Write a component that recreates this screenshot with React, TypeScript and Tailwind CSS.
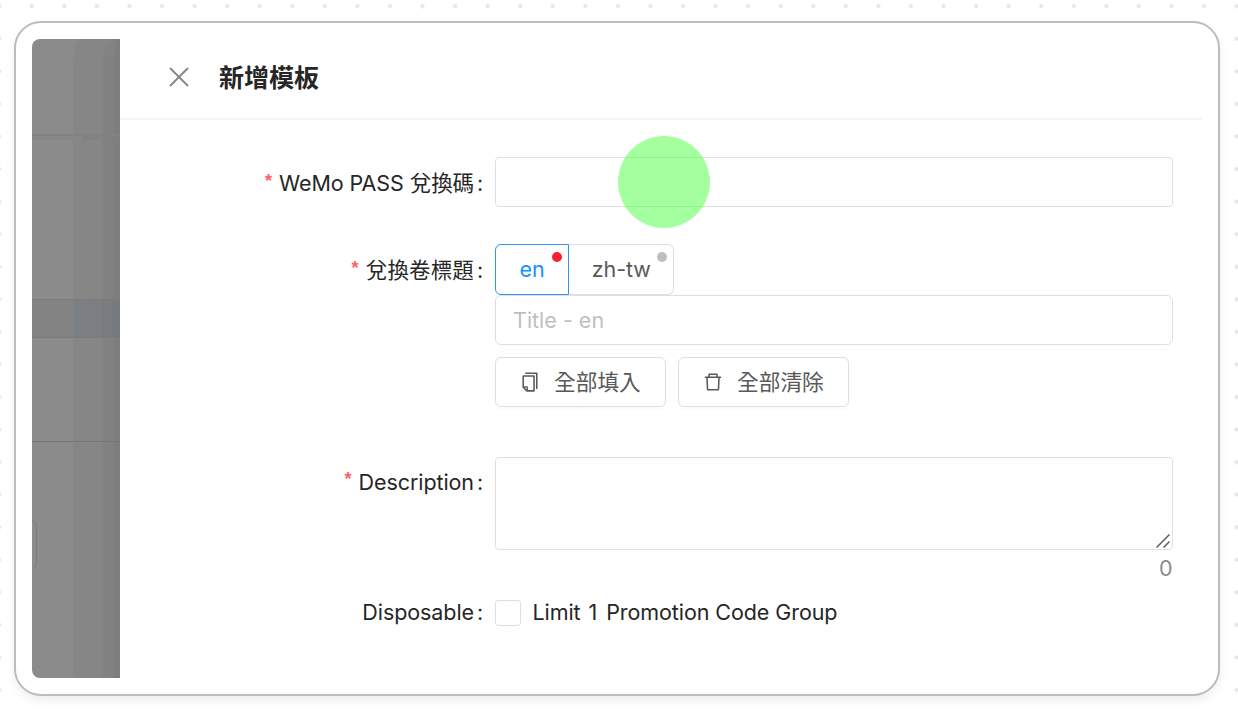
import type { ReactNode } from "react";

function Label({ text, required = false, className = "" }: { text: string; required?: boolean; className?: string }) {
  return (
    <div className={`flex w-[375.500px] shrink-0 items-center justify-end whitespace-nowrap pr-[11.500px] leading-8 tracking-[-0.08px] ${className}`}>
      {required && (
        <span className="mr-[7px] -mt-[5px] font-['Liberation_Sans','Noto_Sans',sans-serif] text-[18px] font-bold text-[#ff6163]">*</span>
      )}
      <span>{text}</span>
      <span className="ml-[3px] w-[6px] text-center">:</span>
    </div>
  );
}

function ActionButton({ icon, children }: { icon: ReactNode; children: ReactNode }) {
  return (
    <button className="flex h-[50px] w-[171px] items-center rounded-[6px] border-[1.5px] border-[#dedede] pl-[23px] text-[21.7px] text-[#595959] shadow-[0_3px_0_rgba(0,0,0,0.015)]">
      {icon}
      <span className="ml-[13.500px] whitespace-nowrap">{children}</span>
    </button>
  );
}

function CopyIcon() {
  return (
    <svg width="22" height="22" viewBox="0 0 1024 1024" fill="currentColor">
      <path d="M832 64H296c-4.400 0-8 3.600-8 8v56c0 4.400 3.600 8 8 8h496v688c0 4.400 3.600 8 8 8h56c4.400 0 8-3.600 8-8V96c0-17.700-14.300-32-32-32zM704 192H192c-17.700 0-32 14.300-32 32v530.700c0 8.500 3.400 16.600 9.400 22.600l173.300 173.300c2.200 2.200 4.700 4 7.400 5.500v1.900h4.200c3.500 1.300 7.200 2 11 2H704c17.700 0 32-14.300 32-32V224c0-17.700-14.300-32-32-32zM350 856.200L263.900 770H350v86.200zM664 888H414V746c0-22.100-17.900-40-40-40H232V264h432v624z" />
    </svg>
  );
}

function DeleteIcon() {
  return (
    <svg width="22" height="22" viewBox="0 0 1024 1024" fill="currentColor">
      <path d="M360 184h-8c4.400 0 8-3.600 8-8v8h304v-8c0 4.400 3.600 8 8 8h-8v72h72v-80c0-35.300-28.700-64-64-64H352c-35.300 0-64 28.700-64 64v80h72v-72zm504 72H160c-17.700 0-32 14.300-32 32v32c0 4.400 3.600 8 8 8h60.400l24.700 523c1.600 34.100 29.800 61 63.900 61h454c34.200 0 62.300-26.800 63.900-61l24.700-523H888c4.400 0 8-3.600 8-8v-32c0-17.700-14.300-32-32-32zM731.300 840H292.700l-24.200-512h487l-24.200 512z" />
    </svg>
  );
}

function Shade({ curved = false }: { curved?: boolean }) {
  return (
    <>
      <div className={`absolute inset-y-0 left-[41px] right-0 bg-[#868686] ${curved ? "rounded-tl-[7px_40px]" : ""}`} />
      <div className={`absolute inset-y-0 left-[70px] right-0 bg-[#828282] ${curved ? "rounded-tl-[10px_38px]" : ""}`} />
      <div className={`absolute inset-y-0 left-[81px] right-0 bg-[#7e7e7e] ${curved ? "rounded-tl-[9px_60px]" : ""}`} />
    </>
  );
}

function DimmedPage() {
  return (
    <div className="flex w-[87.500px] shrink-0 flex-col overflow-hidden rounded-l-[8px] bg-[#8b8b8b]">
      <div className="relative h-[95px] shrink-0">
        <Shade curved />
      </div>
      <div className="h-[2px] shrink-0 bg-[#828282]" />
      <div className="relative flex-1">
        <Shade />
        <div className="absolute inset-x-0 top-0 h-[4px] bg-[linear-gradient(90deg,#878787_0_50px,#828282_50px_80px,#7e7e7e_80px)]" />
        <div className="absolute inset-x-0 top-[163px] h-[39px] border-y border-[#7b7b7b] bg-[linear-gradient(90deg,#838383_0_41px,#7d8083_41px_50px,#7d7e83_50px_70px,#7b7c80_70px_80px,#76797d_80px)]" />
        <div className="absolute inset-x-0 top-[305px] h-px bg-[#777777]" />
        <div className="absolute -left-[10px] top-[384px] h-[49px] w-[15px] rounded-[6px] border-[1.5px] border-[#7d7d7d]" />
      </div>
    </div>
  );
}

export default function App() {
  return (
    <div className="relative h-[710px] w-[1238px] overflow-hidden bg-white pl-[14px] pt-[20.500px] font-['Inter','Noto_Sans_CJK_TC',sans-serif] text-[21.5px] text-[#262626]">
      <div className="absolute inset-0 bg-[radial-gradient(circle_at_16.28px_16.28px,#e5e5e5_1.7px,transparent_2.4px)] bg-[length:32.570px_32.570px] bg-[position:-17.080px_-10.080px]" />
      <div className="relative flex h-[675.500px] w-[1206px] rounded-[27px] border-2 border-[#bcbcbc] bg-white py-[16.500px] pl-[16px] pr-[16px] shadow-[0_5px_10px_rgba(0,0,0,0.065)]">
        <DimmedPage />
        <main className="-ml-[0.5px] min-w-0 flex-1">
          <header className="flex h-[81px] items-center border-b-2 border-[#f5f5f5] pl-[49.500px]">
            <svg width="20" height="20" viewBox="0 0 20 20" fill="none" stroke="#858585" strokeWidth="1.8" className="-mt-[4px]">
              <path d="M1 1L19 19M19 1L1 19" />
            </svg>
            <h1 className="-mt-[2px] ml-[30.500px] text-[25px] font-bold leading-8">新增模板</h1>
          </header>
          <form className="pt-[37px]">
            <div className="flex h-[87px]">
              <Label text="WeMo PASS 兌換碼" required className="mt-[10px] h-8" />
              <div className="relative h-[49.500px] w-[678px] rounded-[4px] border-[1.5px] border-[#dfdfdf]">
                <div className="absolute -top-[22px] left-[122px] size-[92px] rounded-full bg-[rgba(73,255,64,0.5)]" />
              </div>
            </div>
            <div className="flex h-[212.500px]">
              <Label text="兌換卷標題" required className="mt-[10px] h-8 tracking-[0.15px]" />
              <div className="w-[678px]">
                <div className="flex h-[51px]">
                  <div className="relative flex w-[74px] items-center justify-center rounded-l-[6px] border-[1.5px] border-[#2f93fa] pb-px pl-px text-[#1890ff]">
                    en
                    <span className="absolute right-[6px] top-[7px] size-[10px] rounded-full bg-[#f5222d]" />
                  </div>
                  <div className="relative flex w-[105.500px] items-center justify-center rounded-r-[6px] border-[1.5px] border-l-0 border-[#dfdfdf] pb-px pl-px tracking-[-0.1px] text-[#595959]">
                    zh-tw
                    <span className="absolute right-[6px] top-[7px] size-[10px] rounded-full bg-[#bfbfbf]" />
                  </div>
                </div>
                <div className="flex h-[49.500px] items-center rounded-[6px] border-[1.5px] border-[#dfdfdf] pl-[17.500px] text-[#bfbfbf]">Title - en</div>
                <div className="mt-[12.500px] flex gap-[12px]">
                  <ActionButton icon={<CopyIcon />}>全部填入</ActionButton>
                  <ActionButton icon={<DeleteIcon />}>全部清除</ActionButton>
                </div>
              </div>
            </div>
            <div className="flex h-[143px]">
              <Label text="Description" required className="mt-[9px] h-8" />
              <div className="w-[678px]">
                <div className="relative h-[93px] rounded-[4px] border-[1.5px] border-[#dfdfdf]">
                  <svg className="absolute bottom-[1px] right-[2px]" width="14" height="14" viewBox="0 0 14 14" fill="none" stroke="#5c5c5c" strokeWidth="1.5">
                    <path d="M.5 13.500L13.500.5M7.500 13.500L13.500 7.500" />
                  </svg>
                </div>
                <div className="pt-[2px] text-right leading-8 text-[#8c8c8c]">0</div>
              </div>
            </div>
            <div className="flex h-[26px] items-center">
              <Label text="Disposable" className="-mt-px" />
              <span className="size-[26px] rounded-[3px] border-[1.5px] border-[#dfdfdf]" />
              <span className="ml-[12px] whitespace-nowrap tracking-[-0.08px]">
                Limit <span className="ml-[2px] mr-[3px]">1</span> Promotion Code Group
              </span>
            </div>
          </form>
        </main>
      </div>
    </div>
  );
}
